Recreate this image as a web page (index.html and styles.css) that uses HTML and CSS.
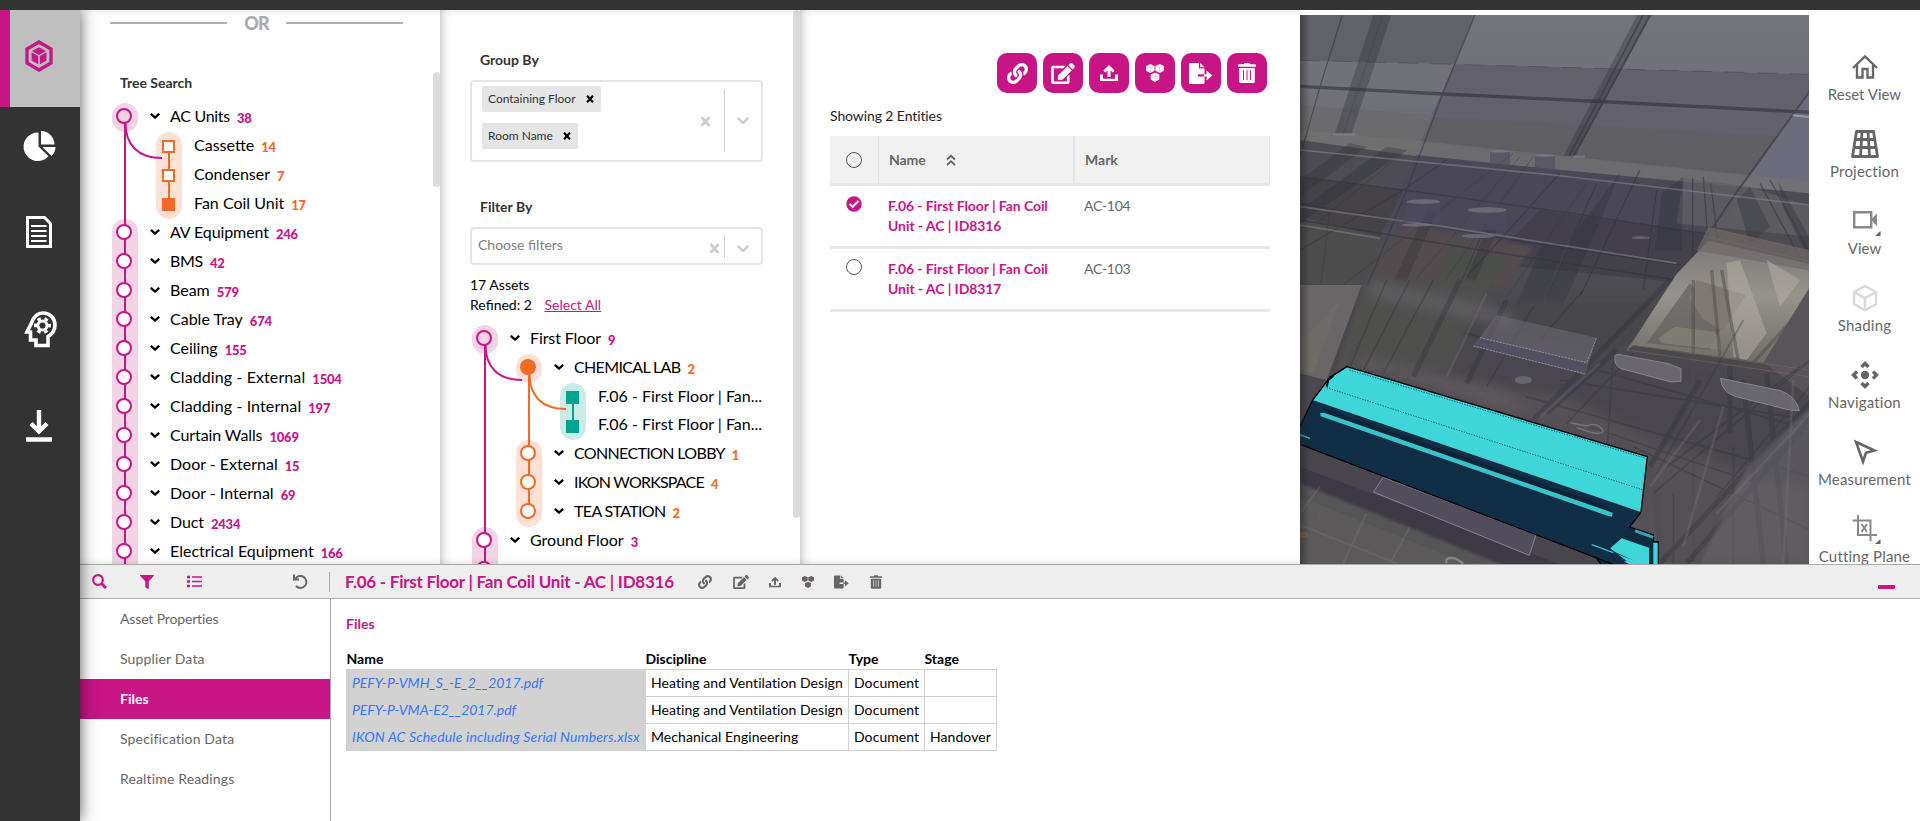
FILE: index.html
```html
<!DOCTYPE html>
<html lang="en">
<head>
<meta charset="utf-8">
<title>Asset Explorer</title>
<link rel="stylesheet" href="styles.css">
</head>
<body>
<svg class="sprite" aria-hidden="true">
  <symbol id="link" viewBox="0 0 512 512"><path d="M326.612 185.391c59.747 59.809 58.927 155.698.36 214.59-.11.12-.24.25-.36.37l-67.2 67.2c-59.27 59.27-155.699 59.262-214.96 0-59.27-59.26-59.27-155.7 0-214.96l37.106-37.106c9.84-9.84 26.786-3.3 27.294 10.606.648 17.722 3.826 35.527 9.69 52.721 1.986 5.822.567 12.262-3.783 16.612l-13.087 13.087c-28.026 28.026-28.905 73.66-1.155 101.96 28.024 28.579 74.086 28.749 102.325.51l67.2-67.19c28.191-28.191 28.073-73.757 0-101.83-3.701-3.694-7.429-6.564-10.341-8.569a16.037 16.037 0 0 1-6.947-12.606c-.396-10.567 3.348-21.456 11.698-29.806l21.054-21.055c5.521-5.521 14.182-6.199 20.584-1.731a152.482 152.482 0 0 1 20.522 17.197zM467.547 44.449c-59.261-59.262-155.69-59.27-214.96 0l-67.2 67.2c-.12.12-.25.25-.36.37-58.566 58.892-59.387 154.781.36 214.59a152.454 152.454 0 0 0 20.521 17.196c6.402 4.468 15.064 3.789 20.584-1.731l21.054-21.055c8.35-8.35 12.094-19.239 11.698-29.806a16.037 16.037 0 0 0-6.947-12.606c-2.912-2.005-6.64-4.875-10.341-8.569-28.073-28.073-28.191-73.639 0-101.83l67.2-67.19c28.239-28.239 74.3-28.069 102.325.51 27.75 28.3 26.872 73.934-1.155 101.96l-13.087 13.087c-4.35 4.35-5.769 10.79-3.783 16.612 5.864 17.194 9.042 34.999 9.69 52.721.509 13.906 17.454 20.446 27.294 10.606l37.106-37.106c59.271-59.259 59.271-155.699.001-214.959z"/></symbol>
  <symbol id="edit" viewBox="0 0 576 512"><path d="M402.6 83.2l90.2 90.2c3.8 3.8 3.8 10 0 13.8L274.4 405.6l-92.8 10.3c-12.4 1.4-22.9-9.1-21.5-21.5l10.3-92.8L388.8 83.2c3.8-3.8 10-3.8 13.8 0zm162-22.9l-48.8-48.8c-15.2-15.2-39.9-15.2-55.2 0l-35.4 35.4c-3.8 3.8-3.8 10 0 13.8l90.2 90.2c3.8 3.8 10 3.8 13.8 0l35.4-35.4c15.2-15.3 15.2-40 0-55.2zM384 346.2V448H64V128h229.8c3.2 0 6.2-1.3 8.5-3.5l40-40c7.6-7.6 2.2-20.5-8.5-20.5H48C21.5 64 0 85.5 0 112v352c0 26.5 21.5 48 48 48h352c26.5 0 48-21.5 48-48V306.2c0-10.7-12.9-16-20.5-8.5l-40 40c-2.2 2.3-3.5 5.3-3.5 8.5z"/></symbol>
  <symbol id="upload" viewBox="0 0 18 18"><path d="M9 1l5.600 5.600-1.900 1.900-2.200-2.200V13h-3V6.300L5.300 8.500 3.400 6.600zM0 10.500h3v4.300h12v-4.300h3V17H0z"/></symbol>
  <symbol id="boxes" viewBox="0 0 18 18"><path d="M4.300 0l4.300 1.900v4.800L4.300 9 0 6.700V1.900zM13.700 0L18 1.900v4.800L13.700 9 9.400 6.700V1.900zM9 8.500l4.300 2v5.100L9 18l-4.300-2.400v-5.100z"/><path class="seam" d="M.8 2.300l3.500 1.600 3.500-1.600M4.300 4v4.500M10.200 2.300l3.500 1.600 3.500-1.600M13.700 4v4.500M5.500 11.300L9 12.900l3.500-1.600M9 13v4.500"/></symbol>
  <symbol id="export" viewBox="0 0 24 21"><path d="M1.300 0H10v5.500h5.500v5.800H9v2.200h6.500v6.300q0 1.200-1.200 1.200H1.200Q0 21 0 19.800V1.200Q0 0 1.300 0zM11.300 0l4.200 4.300h-4.200zM17.500 7.600l6 5-6 5v-4.100H15v-2.200h2.500z"/></symbol>
  <symbol id="trash" viewBox="0 0 18 20"><path fill-rule="evenodd" d="M6.500 0h5l.7 1.200H17q1 0 1 1v1.500H0V2.200q0-1 1-1h4.800zM1.200 5h15.600v13.400q0 1.600-1.600 1.600H2.800q-1.600 0-1.600-1.600zM5 7.300v10h1v-10zM8.500 7.300v10h1v-10zM12 7.300v10h1v-10z"/></symbol>
  <symbol id="chev" viewBox="0 0 10 6"><path d="M.8 .8l4.200 3.700L9.200 .8" fill="none" stroke="currentColor" stroke-width="2.300"/></symbol>
  <symbol id="cross" viewBox="0 0 10 10"><path d="M1.300 1l7.400 8M8.700 1L1.300 9" fill="none" stroke="currentColor" stroke-width="2.600"/></symbol>
  <symbol id="down" viewBox="0 0 12 8"><path d="M1.200 1.400L6 6l4.800-4.600" fill="none" stroke="currentColor" stroke-width="2.300" stroke-linecap="round"/></symbol>
</svg>

<header class="topbar"></header>
<div class="shell">
  <nav class="rail">
    <a class="rail-item active"><svg width="28" height="32" viewBox="0 0 28 32"><path d="M14 2l12 7v14l-12 7-12-7V9z" fill="none" stroke="currentColor" stroke-width="3.300"/><path d="M14 7.200l7 3.800-7 4-7-4zM6.600 12.300l6.600 3.700v8.200l-6.600-3.800zM21.400 12.300L14.800 16v8.200l6.600-3.800z" fill="currentColor"/></svg></a>
    <a class="rail-item pie"><svg width="31" height="30" viewBox="0 0 31 30"><path d="M13.500 1.500v14l10 9.800A14.300 14.300 0 1 1 13.500 1.500z" fill="currentColor"/><path d="M16 0a13.500 13.500 0 0 1 13.500 13.500H16zM17.500 16h13q0 5-4 9z" fill="currentColor"/></svg></a>
    <a class="rail-item doc"><svg width="26" height="32" viewBox="0 0 26 32"><path d="M1.500 1.500h17l6 6v23h-23z" fill="none" stroke="currentColor" stroke-width="3"/><path d="M5 10h15.500M5 15h15.500M5 20h15.500M5 25h15.500" stroke="currentColor" stroke-width="2.200"/></svg></a>
    <a class="rail-item head"><svg width="32" height="37" viewBox="0 0 32 37"><path d="M11 34.500V29H5.500v-8H2L6.500 12C8.500 6 12.500 2 18 2c7 0 12 5 12 12 0 5-2.500 9-7 11.500v9z" fill="none" stroke="currentColor" stroke-width="3.600"/><circle cx="17.500" cy="14.500" r="4.600" fill="none" stroke="currentColor" stroke-width="3"/><circle cx="17.500" cy="14.500" r="7" fill="none" stroke="currentColor" stroke-width="3" stroke-dasharray="3.660 3.660" stroke-dashoffset="1.800"/></svg></a>
    <a class="rail-item get"><svg width="26" height="32" viewBox="0 0 26 32"><path d="M13 0v20M5 13.500l8 8 8-8" fill="none" stroke="currentColor" stroke-width="4.400"/><path d="M0 29.500h26" stroke="currentColor" stroke-width="4.500"/></svg></a>
  </nav>

  <div class="workspace">
    <div class="upper">
      <section class="panel search-panel">
        <div class="or"><span class="or-line"></span><b>OR</b><span class="or-line"></span></div>
        <h3 class="panel-title">Tree Search</h3>
        <div class="tree">
          <div class="row pink open"><i class="node"></i><svg class="chev"><use href="#chev"/></svg><span class="snug">AC Units</span><b>38</b></div>
          <div class="branch pink">
            <svg class="curve" width="40" height="40" viewBox="0 0 40 40"><path d="M1.500 0C1.500 22 14 35 38 35" fill="none" stroke="currentColor" stroke-width="2"/></svg>
            <div class="row orange leaf first"><i class="node"></i><span>Cassette</span><b>14</b></div>
            <div class="row orange leaf"><i class="node"></i><span>Condenser</span><b>7</b></div>
            <div class="row orange leaf last full"><i class="node"></i><span>Fan Coil Unit</span><b>17</b></div>
          </div>
          <div class="row pink first"><i class="node"></i><svg class="chev"><use href="#chev"/></svg><span class="trim">AV Equipment</span><b>246</b></div>
          <div class="row pink"><i class="node"></i><svg class="chev"><use href="#chev"/></svg><span class="snug">BMS</span><b>42</b></div>
          <div class="row pink"><i class="node"></i><svg class="chev"><use href="#chev"/></svg><span>Beam</span><b>579</b></div>
          <div class="row pink"><i class="node"></i><svg class="chev"><use href="#chev"/></svg><span>Cable Tray</span><b>674</b></div>
          <div class="row pink"><i class="node"></i><svg class="chev"><use href="#chev"/></svg><span>Ceiling</span><b>155</b></div>
          <div class="row pink"><i class="node"></i><svg class="chev"><use href="#chev"/></svg><span class="wide">Cladding - External</span><b>1504</b></div>
          <div class="row pink"><i class="node"></i><svg class="chev"><use href="#chev"/></svg><span class="wide">Cladding - Internal</span><b>197</b></div>
          <div class="row pink"><i class="node"></i><svg class="chev"><use href="#chev"/></svg><span class="trim">Curtain Walls</span><b>1069</b></div>
          <div class="row pink"><i class="node"></i><svg class="chev"><use href="#chev"/></svg><span>Door - External</span><b>15</b></div>
          <div class="row pink"><i class="node"></i><svg class="chev"><use href="#chev"/></svg><span>Door - Internal</span><b>69</b></div>
          <div class="row pink"><i class="node"></i><svg class="chev"><use href="#chev"/></svg><span class="trim">Duct</span><b>2434</b></div>
          <div class="row pink"><i class="node"></i><svg class="chev"><use href="#chev"/></svg><span>Electrical Equipment</span><b>166</b></div>
        </div>
        <span class="thumb thumb-search"></span>
      </section>

      <section class="panel group-panel">
        <h3 class="panel-title group-title">Group By</h3>
        <div class="select multi">
          <div class="tags">
            <span class="tag">Containing Floor<svg><use href="#cross"/></svg></span>
            <span class="tag">Room Name<svg><use href="#cross"/></svg></span>
          </div>
          <svg class="clear"><use href="#cross"/></svg><span class="sep"></span><svg class="down"><use href="#down"/></svg>
        </div>
        <h3 class="panel-title filter-title">Filter By</h3>
        <div class="select single">
          <span class="placeholder">Choose filters</span>
          <svg class="clear"><use href="#cross"/></svg><span class="sep"></span><svg class="down"><use href="#down"/></svg>
        </div>
        <div class="summary">17 Assets</div>
        <div class="summary">Refined: 2 <a>Select All</a></div>
        <div class="tree">
          <div class="row pink open"><i class="node"></i><svg class="chev"><use href="#chev"/></svg><span class="trim">First Floor</span><b>9</b></div>
          <div class="branch pink">
            <svg class="curve" width="40" height="40" viewBox="0 0 40 40"><path d="M1.500 0C1.500 22 14 35 38 35" fill="none" stroke="currentColor" stroke-width="2"/></svg>
            <div class="row orange open full"><i class="node"></i><svg class="chev"><use href="#chev"/></svg><span class="caps">CHEMICAL LAB</span><b>2</b></div>
            <div class="branch orange">
              <svg class="curve" width="40" height="40" viewBox="0 0 40 40"><path d="M1.500 0C1.500 22 14 35 38 35" fill="none" stroke="currentColor" stroke-width="2"/></svg>
              <div class="row teal leaf first full"><i class="node"></i><span>F.06 - First Floor | Fan...</span></div>
              <div class="row teal leaf last full"><i class="node"></i><span>F.06 - First Floor | Fan...</span></div>
            </div>
            <div class="row orange first"><i class="node"></i><svg class="chev"><use href="#chev"/></svg><span class="caps">CONNECTION LOBBY</span><b>1</b></div>
            <div class="row orange"><i class="node"></i><svg class="chev"><use href="#chev"/></svg><span class="caps ikon">IKON WORKSPACE</span><b>4</b></div>
            <div class="row orange last"><i class="node"></i><svg class="chev"><use href="#chev"/></svg><span class="caps">TEA STATION</span><b>2</b></div>
          </div>
          <div class="row pink first"><i class="node"></i><svg class="chev"><use href="#chev"/></svg><span>Ground Floor</span><b>3</b></div>
          <div class="row pink"><i class="node"></i><svg class="chev"><use href="#chev"/></svg><span>Second Floor</span></div>
        </div>
        <span class="thumb thumb-group"></span>
      </section>

      <section class="panel entity-panel">
        <div class="actions">
          <button><svg width="21" height="21"><use href="#link"/></svg></button>
          <button><svg width="24" height="21"><use href="#edit"/></svg></button>
          <button><svg width="18" height="18"><use href="#upload"/></svg></button>
          <button><svg width="18" height="18"><use href="#boxes"/></svg></button>
          <button><svg width="24" height="21"><use href="#export"/></svg></button>
          <button><svg width="18" height="20"><use href="#trash"/></svg></button>
        </div>
        <p class="showing">Showing 2 Entities</p>
        <div class="grid">
          <div class="grid-row grid-head">
            <div class="cell-check"><i class="ring"></i></div>
            <div class="cell-name">Name<svg width="10" height="12" viewBox="0 0 10 12"><path d="M1 5.500l4-3.800 4 3.800M1 11l4-3.800L9 11" fill="none" stroke="currentColor" stroke-width="1.900"/></svg></div>
            <div class="cell-mark">Mark</div>
          </div>
          <div class="grid-row">
            <div class="cell-check"><svg width="16" height="16" viewBox="0 0 16 16"><circle cx="8" cy="8" r="7.700" fill="#c71585"/><path d="M3.600 8l3 3L12.400 5" fill="none" stroke="#fff" stroke-width="2"/></svg></div>
            <div class="cell-name">F.06 - First Floor | Fan Coil<br>Unit - AC | ID8316</div>
            <div class="cell-mark">AC-104</div>
          </div>
          <div class="grid-row">
            <div class="cell-check"><i class="ring"></i></div>
            <div class="cell-name">F.06 - First Floor | Fan Coil<br>Unit - AC | ID8317</div>
            <div class="cell-mark">AC-103</div>
          </div>
        </div>
      </section>

      <section class="viewer">
        <svg width="509" height="549" viewBox="0 0 509 549">
          <defs>
            <linearGradient id="bg" x1="0" y1="0" x2="0" y2="1"><stop offset="0" stop-color="#73737c"/><stop offset=".16" stop-color="#707077"/><stop offset=".26" stop-color="#66666a"/><stop offset=".29" stop-color="#535359"/><stop offset=".5" stop-color="#48474c"/><stop offset=".75" stop-color="#4c4a50"/><stop offset="1" stop-color="#58545a"/></linearGradient>
            <linearGradient id="glass" x1="0" y1="0" x2="0" y2="1"><stop offset="0" stop-color="#7b7776"/><stop offset=".45" stop-color="#96938d"/><stop offset="1" stop-color="#6f6d67"/></linearGradient>
            <linearGradient id="rim" x1="0" y1="0" x2="1" y2="0"><stop offset="0" stop-color="#222" stop-opacity=".5"/><stop offset="1" stop-color="#222" stop-opacity="0"/></linearGradient>
            <linearGradient id="fade" x1="0" y1="0" x2="0" y2="1"><stop offset="0" stop-color="#464548" stop-opacity="0"/><stop offset="1" stop-color="#464548"/></linearGradient>
            <filter id="soft"><feGaussianBlur stdDeviation="5"/></filter>
            <filter id="wash" x="-20%" y="-20%" width="140%" height="140%"><feGaussianBlur stdDeviation="18"/></filter>
          </defs>
          <rect width="509" height="549" fill="url(#bg)"/>
          <!-- ceiling slabs and joists -->
          <g transform="translate(0 -5) scale(.33333)">
            <path d="M0 15h525l-62 148L0 151z" fill="#616168"/>
            <path d="M463 163l1067 30v50L1225 672 1170 740 250 640z" fill="#62616b"/>
            <path d="M0 285l400 30-40 80L0 360z" fill="#6b6b6e"/>
            <path d="M400 320l1080 60v130L365 400z" fill="#5f5e62" opacity=".8"/>
            <path d="M1530 243v330l-220-20z" fill="#6d6c7c"/>
            <path d="M0 360l370 34 1160 120v50L0 400z" fill="#76756f" opacity=".5"/>
            <path d="M0 390l360 50 1170 110v330H0z" fill="#4d4c52"/>
            <path d="M350 435l1000 105-130 150-200 50-250 10-400-70-120-30z" fill="#4a4857" opacity=".9"/>
            <path d="M0 500l310 40-70 140L0 640z" fill="#454248"/>
            <path d="M720 600l500 70-60 150-600-60z" fill="#413e49" opacity=".8"/>
            <path d="M0 620l240 60-60 200H0z" fill="#4b4c4b"/>
            <path d="M220 780l100-130 380 60-100 130H210z" fill="#524b4d" filter="url(#soft)"/>
            <path d="M390 880l60-160 170 20-70 140z" fill="#4b4f49" filter="url(#soft)"/>
            <path d="M1150 505l200 25 180 60v90l-300-30-100-10z" fill="#626066" opacity=".75"/>
            <g fill="#30313a" opacity=".36">
              <path d="M220 15h54L155 370h-50zM1012 15h43L825 437h-35zM962 485l-80 190-90 205h-60l100-220zM1150 500l-5 220h-80l20-170zM1350 530l60 120-60 50-40-130zM1435 515l95 170v70l-80-160zM0 510L150 400l50 10L0 560zM0 600l260-190 60 10-320 220zM470 880l90-230 30 10-90 220zM650 880l80-180h70l-70 180zM250 880l130-280 30 5-120 275z"/>
            </g>
            <g fill="none" stroke="#33343c" opacity=".55">
              <path d="M127 15L60 230 0 440M525 15L430 245 320 540 185 870" stroke-width="4"/>
              <path d="M0 151l463 12 1067 30" stroke-width="2" stroke-dasharray="60 38"/>
              <path d="M0 229l430 23 440 21 660 34" stroke-width="10" stroke="#2c2b36"/>
              <path d="M1530 243L1300 560 1225 672 1110 860" stroke-width="6"/>
              <path d="M1030 15L808 437M1050 15L822 437" stroke-width="5"/>
              <path d="M248 15L130 370" stroke-width="2" stroke-dasharray="4 3"/>
              <path d="M0 500l310 40 460 63 460 70M0 580l700 120 440 65M0 630l540 90 590 90" stroke-width="4"/>
              <path d="M0 720L310 540 440 450M500 800l280-310M560 640l-100 230M740 860l150-340M840 860l180-380M1178 505v375M1232 520l45 360M1210 500l27 380M1380 520l150 280M1410 510l120 220M1070 540l-40 300" stroke-width="4"/>
              <path d="M110 840L640 430M320 840l340-400M400 860l300-420M620 860l240-340M0 680l320-260M60 840l30-240" stroke-width="2"/>
            </g>
            <g fill="none" stroke="#8b8b92" opacity=".5">
              <path d="M0 420l760 75 770 90M0 590l430 60 700 110M0 645l240 40" stroke-width="5"/>
              <path d="M1478 316l52 5" stroke="#c5c5d0" stroke-width="6"/>
              <path d="M100 373h65M820 440h35" stroke-width="7"/>
            </g>
            <g fill="#4e4b60" opacity=".6"><path d="M570 425h60v45h-60zM705 437h60v52h-60zM320 572h100v65H310zM505 600h115v60H500z"/></g>
            <g fill="#85848c" opacity=".55"><ellipse cx="600" cy="424" rx="30" ry="4"/><ellipse cx="735" cy="437" rx="30" ry="4"/><ellipse cx="370" cy="575" rx="50" ry="7"/><ellipse cx="562" cy="600" rx="58" ry="8"/><ellipse cx="350" cy="645" rx="45" ry="5"/><ellipse cx="535" cy="678" rx="50" ry="6"/><ellipse cx="1022" cy="683" rx="28" ry="4"/></g>
          </g>
          <!-- lower half: skylight, luminaires and bracing -->
          <g transform="translate(0 265) scale(.33333)">
            <path d="M0 0h1180L940 220 0 120z" fill="url(#fade)"/>
            <path d="M0 15h185L80 300 0 280z" fill="#6a6667"/>
            <path d="M120 60l-80 220-40-10V190z" fill="#6f6e67" opacity=".7"/>
            <path d="M190 20L110 270h330L570 0H260z" fill="#4f504d" filter="url(#soft)"/>
            <path d="M210 0l420 90 20 60-440-100z" fill="#66646a" opacity=".6" filter="url(#wash)"/>
            <path d="M450 300l150-150 400 80 530 100v520H1080L1040 530z" fill="#4a474d" filter="url(#soft)"/>
            <path d="M300 290l500 60 300 150 430 130v220H1080L1040 530 500 350z" fill="#605b61" opacity=".5" filter="url(#wash)"/>
            <path d="M190 230l400 90 100 90-520-150z" fill="#625c60" opacity=".7" filter="url(#wash)"/>
            <path d="M1225-118l305 70V90L1390 248 1000 195 980 212l150-230z" fill="url(#glass)"/>
            <path d="M1225-158l305 70v60l-340-60z" fill="#6f6a6a" opacity=".7"/>
            <path d="M1170 10L1040 190l190 20 40-80-80-90z" fill="#62605e" opacity=".7"/>
            <path d="M1190 0l148 45-70 110-60-40-40-60z" fill="#7f7875"/>
            <path d="M1075 175l50-35 120 15 20 55-180-20z" fill="#85867b" opacity=".7"/>
            <path d="M1320-60l80 220-60 80-40-10-20-280zM1400-60l100 60-60 80z" fill="#b5b0a7" opacity=".5"/>
            <path d="M1235-30l25 260M1265-30l55 300M1180 0v850M1530 60L1350 260" stroke="#504c4c" stroke-width="10" fill="none" opacity=".5"/>
            <path d="M1530 20v330L1390 248z" fill="#58545a"/>
            <path d="M990 195l540 75v20L980 210zM1225-158l305 70M1225-130l305 75" fill="none" stroke="#8a6b58" stroke-width="3" opacity=".5"/>
            <g fill="none" stroke="#2f2d3a" opacity=".32">
              <path d="M480 0L340 290M620 60L500 310M1110 0L700 420M1530 370L1080 850M1530 420L1160 850M1330 300l60 550M1400 280l60 570M1200 300L1050 560M950 210L740 400M1290 260v200" stroke-width="16"/>
              <path d="M260 0L150 260M330 0L190 270M400 0L250 280M700 80L560 320M850 30L720 180M1000 220L800 430M1000 500l530 250M940 230l-20 300M1330 120l-260 460M870 440l500 170M1250 650l280-330M1300 850V500M1120 640v210" stroke-width="5"/>
              <path d="M500 160l1030 290M680 350l850 240M780 300l750 120M1100 560l400-300M1060 640l470-400" stroke-width="6"/>
            </g>
            <path d="M1340 560l190-180v470h-330z" fill="#6a676e" opacity=".5" filter="url(#soft)"/>
            <g fill="none" stroke="#77737c" opacity=".3" stroke-width="8"><path d="M1200 420l-150 200M1250 700l280-300M900 250l-180 160M560 40l-120 250M1150 800l120-420M1480 300l-30 550"/></g>
            <!-- glazed luminaires -->
            <path d="M590 105l300 68-35 110-335-85z" fill="#6a6872" opacity=".6"/>
            <path d="M540 173l320 75-5 34-335-84z" fill="#504d61" opacity=".8"/>
            <path d="M540 173l320 75 30-75M520 198l335 84" fill="none" stroke="#8d8c98" stroke-width="3" stroke-dasharray="7 3"/>
            <g fill="#717076" stroke="#94939a" stroke-width="3" opacity=".8"><path d="M955 223l150 28 38 15v38l-30 2-150-40q-22-10-18-40zM1262 295l180 37q45 16 56 60l-30-2-160-40q-45-15-46-55z"/></g>
            <ellipse cx="670" cy="300" rx="26" ry="12" fill="#67656f"/>
            <path d="M810 428l50 10q30-15 50 15-10 15-50 0l-30-10" fill="none" stroke="#77747b" stroke-width="4"/>
            <!-- floor below the unit -->
            <path d="M0 490l970 370H0z" fill="#48454c"/>
            <path d="M0 560l800 300H0z" fill="#3d3a46"/>
            <path d="M0 610l620 250H0z" fill="#575457" filter="url(#soft)"/>
            <path d="M0 650l500 200H0z" fill="#625e60" opacity=".5"/>
            <path d="M0 735l290 115M60 620L0 700M200 700l-70 150M330 740l-60 110" stroke="#85828a" stroke-width="6" opacity=".25"/>
            <path d="M250 592l458 172-20 62-468-190z" fill="#514d5c" stroke="#85838e" stroke-width="3"/>
            <path d="M440 850q-8-20 25-15l25 15" fill="none" stroke="#85838a" stroke-width="7"/>
            <path d="M0 757q25-5 25 8-5 10-25 5zM62 690l-5 35" fill="#7c6541" stroke="#7c6541"/>
            <!-- highlighted fan coil unit -->
            <path d="M985 740l75 25v20h14v90H920l-60-80z" fill="#102c40" stroke="#000" stroke-width="4"/>
            <path d="M965 775l82 28v60l-120-55zM1060 788h13v77h-13z" fill="#3fd6d9"/>
            <path d="M875 794l175 65H1000z" fill="#3fd6d9"/>
            <path d="M1005 752l55 20" stroke="#36a5bd" stroke-width="9"/>
            <path d="M38 360L0 440v53l940 360 40-10-50-38 58-63 35-45z" fill="#102e46"/>
            <path d="M38 360L0 440M0 493l940 360M1023 697l-35 45" fill="none" stroke="#000" stroke-width="4"/>
            <path d="M141 260l901 270-19 166L38 360l52-68z" fill="#3fd6da"/>
            <path d="M38 360l52-68 51-32 901 270-19 166" fill="none" stroke="#000" stroke-width="4" stroke-linejoin="round"/>
            <path d="M70 385l830 285 40 25-10 10L100 415z" fill="#0b2437"/>
            <path d="M60 400l12-2 866 300-2 12-14-3L62 409z" fill="#38c3cb"/>
            <path d="M0 464l30 11M875 794l65 24" stroke="#38c3cb" stroke-width="4"/>
            <path d="M148 270l890 265M80 323l950 307" fill="none" stroke="#155265" stroke-width="3" stroke-dasharray="4 4"/>
            <path d="M80 320l5-20 15-12" fill="none" stroke="#000" stroke-width="6"/>
          </g>
          <rect width="10" height="549" fill="url(#rim)"/>
        </svg>
      </section>

      <aside class="tools">
        <div class="tool"><svg width="26" height="24" viewBox="0 0 26 24"><path d="M1 13L13 1.500 25 13M5 10v12.500h5.500V14h5v8.500H21V10" fill="none" stroke="currentColor" stroke-width="2.400"/></svg><span>Reset View</span></div>
        <div class="tool"><svg width="28" height="28" viewBox="0 0 28 28"><path d="M5.500 1.500h17l4 25h-25zM4.300 9.500h19.400M3 17.500h22M11 1.500l-1.500 25M17 1.500l1.500 25" fill="none" stroke="currentColor" stroke-width="2.800" stroke-linejoin="round"/></svg><span class="stretch">Projection</span></div>
        <div class="tool view"><svg width="28" height="28" viewBox="0 0 28 28"><path d="M3.200 5.200h17v15h-17z" fill="none" stroke="currentColor" stroke-width="2.400"/><path d="M20 12.700l6-6.500v13z" fill="currentColor"/><path d="M29.500 24v5H24z" fill="#666"/></svg><span>View</span></div>
        <div class="tool"><svg class="faded" width="26" height="28" viewBox="0 0 26 28"><path d="M13 2l11 6v12l-11 6.300L2 20V8zM2 8l11 6 11-6M13 14v12" fill="none" stroke="currentColor" stroke-width="2.500"/></svg><span class="stretch">Shading</span></div>
        <div class="tool"><svg width="28" height="28" viewBox="0 0 28 28"><circle cx="14" cy="14" r="4.200" fill="currentColor"/><path d="M10.500 6L14 2.500 17.500 6M10.500 22l3.500 3.500 3.500-3.500M6 10.500L2.500 14 6 17.500M22 10.500l3.500 3.500-3.500 3.500" fill="none" stroke="currentColor" stroke-width="3.400"/></svg><span class="stretch">Navigation</span></div>
        <div class="tool"><svg width="26" height="26" viewBox="0 0 26 26"><path d="M4 3l18.500 8.500-8.500 2.300-3 8.700z" fill="none" stroke="currentColor" stroke-width="2.600"/></svg><span class="stretch">Measurement</span></div>
        <div class="tool view"><svg width="28" height="28" viewBox="0 0 28 28"><path d="M7 0v20h19M1.500 5.500h18V26M10.500 9l5.500 8M16 9l-5.500 8" fill="none" stroke="currentColor" stroke-width="2"/><path d="M29.500 24v5H24z" fill="#666"/></svg><span class="stretch">Cutting Plane</span></div>
      </aside>
    </div>

    <div class="bar">
      <div class="bar-tools">
        <svg width="15" height="15" viewBox="0 0 15 15"><circle cx="6" cy="6" r="4.800" fill="none" stroke="currentColor" stroke-width="2.200"/><path d="M9.500 9.500l4.500 4.500" stroke="currentColor" stroke-width="2.800"/></svg>
        <svg width="14" height="14" viewBox="0 0 512 512"><path fill="currentColor" d="M487.976 0H24.028C2.710 0-8.047 25.866 7.058 40.971L192 225.941V432c0 7.831 3.821 15.170 10.237 19.662l80 55.980C298.020 518.690 320 507.493 320 487.980V225.941l184.947-184.970C520.021 25.896 509.338 0 487.976 0z"/></svg>
        <svg width="15" height="13" viewBox="0 0 15 13"><path d="M0 2h3M0 6.500h3M0 11h3" stroke="currentColor" stroke-width="2.500"/><path d="M5 2h10M5 6.500h10M5 11h10" stroke="currentColor" stroke-width="1.700"/></svg>
        <svg class="undo" width="15" height="15" viewBox="0 0 15 15"><path d="M1 .5v5h5M2.200 5A6 6 0 1 1 3 12" fill="none" stroke="currentColor" stroke-width="2"/></svg>
      </div>
      <h2>F.06 - First Floor | Fan Coil Unit - AC | ID8316</h2>
      <div class="bar-actions">
        <svg width="14" height="14"><use href="#link"/></svg>
        <svg width="16" height="14"><use href="#edit"/></svg>
        <svg width="12" height="12"><use href="#upload"/></svg>
        <svg width="12" height="12"><use href="#boxes"/></svg>
        <svg width="15" height="14"><use href="#export"/></svg>
        <svg width="12" height="14"><use href="#trash"/></svg>
      </div>
      <span class="minimise"></span>
    </div>

    <div class="detail">
      <nav class="tabs">
        <a class="narrow">Asset Properties</a><a>Supplier Data</a><a class="current">Files</a><a>Specification Data</a><a>Realtime Readings</a>
      </nav>
      <div class="content">
        <h4>Files</h4>
        <table class="files">
          <thead><tr><th class="c-name">Name</th><th class="c-disc">Discipline</th><th class="c-type">Type</th><th class="c-stage">Stage</th></tr></thead>
          <tbody>
            <tr><td class="file">PEFY-P-VMH_S_-E_2__2017.pdf</td><td>Heating and Ventilation Design</td><td>Document</td><td></td></tr>
            <tr><td class="file">PEFY-P-VMA-E2__2017.pdf</td><td>Heating and Ventilation Design</td><td>Document</td><td></td></tr>
            <tr><td class="file long">IKON AC Schedule including Serial Numbers.xlsx</td><td>Mechanical Engineering</td><td>Document</td><td>Handover</td></tr>
          </tbody>
        </table>
      </div>
    </div>
  </div>
</div>
</body>
</html>
```

FILE: styles.css
```css
*, *::before, *::after { box-sizing: border-box; }
:root { --pink: #c71585; --orange: #f26a25; --teal: #00a591; }
body { margin: 0; height: 821px; overflow: hidden; background: #fff; color: #000; font: 14px/20px Lato, "Open Sans", sans-serif; }
h2, h3, h4, p { margin: 0; }
.sprite { position: absolute; width: 0; height: 0; }
svg { display: block; flex: none; overflow: visible; }

.topbar { height: 10px; background: #333; }
.shell { display: flex; height: 811px; }

.rail { position: relative; z-index: 3; width: 80px; flex: none; background: #333; color: #fff; box-shadow: 0 0 15px rgba(0,0,0,.65); clip-path: inset(0 -25px 0 0); display: flex; flex-direction: column; }
.rail-item { display: block; padding-left: 26px; }
.rail-item.active { height: 97px; background: #bfbfbf; border-left: 10px solid var(--pink); color: var(--pink); padding: 30px 0 0 15px; }
.rail-item.pie { padding: 24px 0 0 25px; }
.doc { padding-top: 55px; }
.rail-item.head { padding: 63px 0 0 25px; }
.get { padding-top: 62px; }

.workspace { flex: 1; min-width: 0; display: flex; flex-direction: column; }
.upper { height: 554px; display: flex; overflow: hidden; }
.panel { position: relative; flex: none; height: 554px; overflow: hidden; }
.panel::after { content: ""; position: absolute; inset: 0; pointer-events: none; box-shadow: inset 0 -7px 7px -6px rgba(0,0,0,.14), inset 0 7px 7px -6px rgba(0,0,0,.1); }
.search-panel { width: 360px; padding: 3px 0 0 30px; }
.group-panel { width: 360px; padding: 40px 0 0 30px; background: linear-gradient(90deg, #d6d6d6, #f6f6f6 6px, #fff 12px); }
.entity-panel { width: 500px; padding: 43px 30px 0 30px; background: linear-gradient(90deg, #d6d6d6, #f6f6f6 6px, #fff 12px); }
.thumb { position: absolute; right: 0; width: 7px; border-radius: 4px; background: #dcdcdc; }
.thumb-search { top: 62px; height: 115px; }
.thumb-group { top: 0; height: 508px; }

.or { display: flex; align-items: center; gap: 17px; width: 293px; height: 20px; color: #aaa; font-size: 18px; }
.or b { width: 25px; text-align: center; letter-spacing: -.8px; font-weight: 900; }
.or-line { flex: 1; height: 2px; background: #b0b0b0; }
.panel-title { font-size: 14px; line-height: 20px; color: #333; padding-left: 10px; }
.search-panel .panel-title { padding-top: 40px; }

.tree { padding-left: 2px; }
.search-panel .tree { padding-top: 10px; }
.group-panel .tree { padding-top: 10px; }
.row { display: flex; align-items: center; height: 29px; white-space: nowrap; font-size: 16px; }
.teal.row { height: 28.500px; }
.row span { margin-top: -3px; }
.row .chev { width: 10px; height: 6px; margin: -3px 10px 0 12px; color: #000; }
.row b { font-size: 13px; margin: 0 0 0 7px; color: var(--c); font-weight: 900; letter-spacing: -.2px; }
.leaf span { margin-left: 12px; }
.snug { letter-spacing: -.3px; }
.trim { letter-spacing: -.1px; }
.wide { letter-spacing: .1px; }
.caps { letter-spacing: -.65px; }
.ikon { letter-spacing: -.8px; }
.node { position: relative; align-self: stretch; width: 26px; background: var(--band); flex: none; }
.node::before { content: ""; position: absolute; left: 12px; top: 0; bottom: 0; width: 2px; background: var(--c); }
.node::after { content: ""; position: absolute; left: 4px; top: 5px; width: 16px; height: 16px; border: 2px solid var(--c); border-radius: 50%; background: #fff; }
.leaf .node::after { left: 6px; top: 8px; width: 13px; height: 13px; border-radius: 0; }
.full .node::after, .leaf.full .node::after { background: var(--c); }
.open .node { border-radius: 13px; }
.open .node::before { top: 20px; }
.open:not(.full) .node::after { background: var(--band); }
.first .node { border-radius: 13px 13px 0 0; }
.last .node { border-radius: 0 0 13px 13px; }
.leaf.first .node::before { top: 14px; }
.last .node::before { bottom: auto; height: 14px; }
.pink { --c: var(--pink); --band: #f3d4e4; }
.orange { --c: var(--orange); --band: #fde0d6; }
.teal { --c: var(--teal); --band: #ccebe7; }
.branch { position: relative; padding-left: 44px; }
.branch::before { content: ""; position: absolute; left: 12px; top: 0; bottom: 0; width: 2px; background: var(--c); z-index: 1; }
.branch > .curve { position: absolute; left: 12px; top: -9px; color: var(--c); z-index: 1; }

.select { width: 293px; border: 2px solid #e5e5e5; border-radius: 4px; display: flex; align-items: center; color: #ccc; }
.multi { height: 82px; margin-top: 10px; }
.single { height: 38px; margin-top: 10px; }
.filter-title { padding-top: 35px; }
.tags { flex: 1; align-self: flex-start; padding: 4px 0 0 10px; display: flex; flex-direction: column; align-items: flex-start; gap: 11px; }
.tag { display: flex; align-items: center; height: 26px; padding: 0 7px 0 6px; border-radius: 2px; background: #e5e5e5; color: #333; font-size: 12px; }
.tag svg { width: 8px; height: 8px; margin-left: 10px; color: #000; }
.clear { width: 11px; height: 11px; }
.multi .clear { margin-right: 13px; }
.single .clear { margin: 5px 4px 0 0; }
.sep { width: 1px; align-self: stretch; margin: 8px 12px 8px 0; background: #ccc; }
.single .sep { margin: 7px 12px 5px 0; }
.down { width: 12px; height: 8px; margin-right: 12px; }
.single .down { margin-top: 5px; }
.placeholder { flex: 1; padding-left: 6px; color: #808080; margin-top: -2px; }
.summary { height: 20px; }
.single + .summary { margin-top: 10px; }
.summary a { color: var(--pink); text-decoration: underline; margin-left: 9px; }

.actions { display: flex; gap: 6px; justify-content: flex-end; padding-right: 3px; }
.actions button { width: 40px; height: 40px; border: 0; padding: 0; border-radius: 10px; background: var(--pink); fill: #fff; display: grid; place-items: center; }
.seam { fill: none; stroke: var(--pink); stroke-width: .5; opacity: .5; }
.showing { padding: 13px 0 10px; color: #222; letter-spacing: -.1px; }
.grid-row { display: flex; height: 63px; border-bottom: 3px solid #e8e8e8; padding-top: 10px; color: #666; }
.grid-head { height: 50px; padding: 0; background: #f1f1f1; font-weight: 700; align-items: stretch; line-height: 47px; border-right: 1px solid #e4e4e4; }
.cell-check { width: 49px; padding: 0 0 0 16px; }
.cell-name { width: 196px; padding-left: 9px; color: var(--pink); font-weight: 700; letter-spacing: -.08px; }
.cell-mark { flex: 1; padding-left: 9px; letter-spacing: -.3px; }
.grid-head .cell-check { border-right: 1px solid #e4e4e4; padding-top: 16px; }
.grid-head .cell-name { color: #666; border-right: 2px solid #e4e4e4; display: flex; align-items: center; gap: 20px; padding-left: 10px; }
.grid-head .cell-mark { padding-left: 10px; letter-spacing: 0; }
.ring { display: block; width: 16px; height: 16px; border: 1.5px solid #555; border-radius: 50%; }

.viewer { width: 510px; flex: none; padding-top: 5px; }
.viewer > svg { overflow: hidden; }
.tools { width: 110px; padding-top: 28px; margin-left: -.5px; color: #666; font-size: 15px; }
.tool { height: 77px; padding-top: 12px; display: flex; flex-direction: column; align-items: center; }
.tool svg { margin: auto 0; }
.tool span { height: 20px; margin-bottom: 11px; white-space: nowrap; }
.tool .stretch { letter-spacing: .2px; }
.tool .faded { color: #dadada; }
.tool.view svg { color: #888; }

.bar { height: 35px; flex: none; background: #eee; border-top: 1px solid #aaa; border-bottom: 1px solid #aaa; display: flex; align-items: center; position: relative; }
.bar-tools { width: 250px; height: 20px; border-right: 1px solid #aaa; display: flex; align-items: center; padding-left: 12px; color: var(--pink); }
.bar-tools svg + svg { margin-left: 33px; }
.bar-tools .undo { margin-left: auto; margin-right: 21px; color: #666; }
.bar h2 { margin-left: 15px; font-size: 17px; letter-spacing: -.24px; color: var(--pink); white-space: nowrap; width: 330px; }
.bar-actions { display: flex; gap: 20.500px; align-items: center; margin-left: 23px; fill: #666; }
.bar-actions .seam { stroke: #eee; }
.minimise { width: 17px; height: 4px; border-radius: 1px; background: var(--pink); margin: 11px 25px 0 auto; }

.detail { flex: 1; display: flex; }
.tabs { width: 251px; border-right: 1px solid #aaa; color: #666; }
.tabs a { display: block; height: 40px; line-height: 40px; padding-left: 40px; letter-spacing: .15px; }
.tabs .narrow { letter-spacing: -.15px; }
.tabs .current { background: var(--pink); color: #fff; font-weight: 700; letter-spacing: 0; }
.content { padding: 15px 0 0 15px; }
.content h4 { font-size: 14px; color: var(--pink); }
.files { border-collapse: collapse; table-layout: fixed; width: 650px; margin-top: 15px; white-space: nowrap; }
.files th { text-align: left; padding: 0; height: 20px; }
.files td { height: 27px; padding: 0 0 0 5px; border: 1px solid #d0d0d0; letter-spacing: .07px; }
.files .file { background: #d2d2d2; color: #3478f6; font-style: italic; letter-spacing: -.02px; }
.files .file.long { letter-spacing: .17px; }
.c-name { width: 299px; } .c-disc { width: 203px; } .c-type { width: 76px; } .c-stage { width: 72px; }
```
